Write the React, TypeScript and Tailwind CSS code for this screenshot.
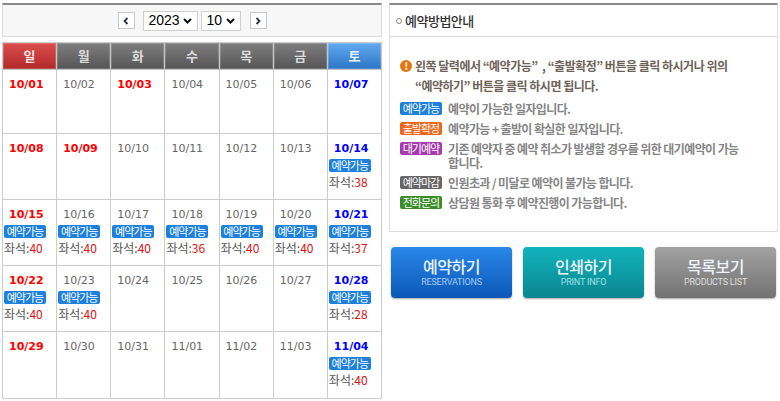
import React from 'react';

type Day = {
  date: string;
  tone: 'sun' | 'sat' | 'day';
  seats?: number;
};

const weeks: { h: string; days: Day[] }[] = [
  {
    h: 'h-[64px]',
    days: [
      { date: '10/01', tone: 'sun' },
      { date: '10/02', tone: 'day' },
      { date: '10/03', tone: 'sun' },
      { date: '10/04', tone: 'day' },
      { date: '10/05', tone: 'day' },
      { date: '10/06', tone: 'day' },
      { date: '10/07', tone: 'sat' },
    ],
  },
  {
    h: 'h-[66px]',
    days: [
      { date: '10/08', tone: 'sun' },
      { date: '10/09', tone: 'sun' },
      { date: '10/10', tone: 'day' },
      { date: '10/11', tone: 'day' },
      { date: '10/12', tone: 'day' },
      { date: '10/13', tone: 'day' },
      { date: '10/14', tone: 'sat', seats: 38 },
    ],
  },
  {
    h: 'h-[66px]',
    days: [
      { date: '10/15', tone: 'sun', seats: 40 },
      { date: '10/16', tone: 'day', seats: 40 },
      { date: '10/17', tone: 'day', seats: 40 },
      { date: '10/18', tone: 'day', seats: 36 },
      { date: '10/19', tone: 'day', seats: 40 },
      { date: '10/20', tone: 'day', seats: 40 },
      { date: '10/21', tone: 'sat', seats: 37 },
    ],
  },
  {
    h: 'h-[66px]',
    days: [
      { date: '10/22', tone: 'sun', seats: 40 },
      { date: '10/23', tone: 'day', seats: 40 },
      { date: '10/24', tone: 'day' },
      { date: '10/25', tone: 'day' },
      { date: '10/26', tone: 'day' },
      { date: '10/27', tone: 'day' },
      { date: '10/28', tone: 'sat', seats: 28 },
    ],
  },
  {
    h: 'h-[67px]',
    days: [
      { date: '10/29', tone: 'sun' },
      { date: '10/30', tone: 'day' },
      { date: '10/31', tone: 'day' },
      { date: '11/01', tone: 'day' },
      { date: '11/02', tone: 'day' },
      { date: '11/03', tone: 'day' },
      { date: '11/04', tone: 'sat', seats: 40 },
    ],
  },
];

const headers = [
  { label: '일', cls: 'bg-gradient-to-b from-[#dc4e4e] to-[#b12828] text-[#f4e4e4]' },
  { label: '월', cls: 'bg-gradient-to-b from-[#7e7e7e] to-[#565656] text-[#dcdcdc]' },
  { label: '화', cls: 'bg-gradient-to-b from-[#7e7e7e] to-[#565656] text-[#dcdcdc]' },
  { label: '수', cls: 'bg-gradient-to-b from-[#7e7e7e] to-[#565656] text-[#dcdcdc]' },
  { label: '목', cls: 'bg-gradient-to-b from-[#7e7e7e] to-[#565656] text-[#dcdcdc]' },
  { label: '금', cls: 'bg-gradient-to-b from-[#7e7e7e] to-[#565656] text-[#dcdcdc]' },
  { label: '토', cls: 'bg-gradient-to-b from-[#62aaf0] to-[#2a76c6] text-[#eaf3ff]' },
];

const legend = [
  { label: '예약가능', cls: 'bg-[#1c80dc]', text: '예약이 가능한 일자입니다.' },
  { label: '출발확정', cls: 'bg-[#f0661c]', text: '예약가능 + 출발이 확실한 일자입니다.' },
  { label: '대기예약', cls: 'bg-[#a43cae]', text: '기존 예약자 중 예약 취소가 발생할 경우를 위한 대기예약이 가능합니다.' },
  { label: '예약마감', cls: 'bg-[#666666]', text: '인원초과 / 미달로 예약이 불가능 합니다.' },
  { label: '전화문의', cls: 'bg-[#3c8c2a]', text: '상담원 통화 후 예약진행이 가능합니다.' },
];

const kr = "font-['Noto_Sans_CJK_KR',sans-serif]";

const Chevron = ({ dir }: { dir: 'left' | 'right' | 'down' }) => {
  if (dir === 'down') {
    return (
      <svg width="9" height="6" viewBox="0 0 9 6">
        <path d="M1 1l3.5 3.5L8 1" stroke="#111" strokeWidth="2" fill="none" />
      </svg>
    );
  }
  return (
    <svg width="6" height="8" viewBox="0 0 6 8">
      <path d={dir === 'left' ? 'M4.5 1L1.5 4l3 3' : 'M1.5 1l3 3-3 3'} stroke="#2a3446" strokeWidth="1.8" fill="none" />
    </svg>
  );
};

const Badge = ({ label, cls }: { label: string; cls: string }) => (
  <span className={`${cls} ${kr} inline-flex w-[42px] h-[13px] shrink-0 items-center justify-center rounded-[2px] text-[11px] leading-none tracking-[-1px] text-white`}>
    {label}
  </span>
);

const DayCell = ({ d }: { d: Day }) => {
  const dateCls =
    d.tone === 'sun'
      ? 'font-bold text-[#ff0000]'
      : d.tone === 'sat'
      ? 'font-bold text-[#0000ff]'
      : 'text-[#666666]';
  return (
    <div className="border-r border-b border-[#cccccc] pt-[7px] pl-[1px]">
      <div className={`pl-[5px] h-[16px] leading-[16px] text-[11px] font-['DejaVu_Sans',sans-serif] ${dateCls}`}>{d.date}</div>
      {d.seats !== undefined && (
        <>
          <div className="mt-[1px] h-[14px] flex items-center">
            <Badge label="예약가능" cls="bg-[#1c80dc]" />
          </div>
          <div className={`${kr} text-[12px] leading-[20px] text-[#555555]`}>
            좌석:<span className="text-[#e01010]">{d.seats}</span>
          </div>
        </>
      )}
    </div>
  );
};

const BigButton = ({ title, sub, cls, subCls }: { title: string; sub: string; cls: string; subCls: string }) => (
  <button
    type="button"
    className={`${cls} w-[121px] h-[51px] rounded-[4px] flex flex-col items-center justify-center shadow-[0_1px_2px_rgba(0,0,0,0.35)]`}
  >
    <span className={`${kr} text-[16px] leading-[18px] font-medium tracking-[-0.5px] text-[#eef4fb]`}>{title}</span>
    <span className={`font-['Roboto',sans-serif] text-[9px] leading-[11px] mt-[2px] tracking-[-0.2px] ${subCls}`}>{sub}</span>
  </button>
);

export default function App() {
  return (
    <div className="w-[780px] h-[401px] bg-white flex pt-[3px] pl-[2px]">
      {/* 달력 */}
      <div className="w-[380px] flex flex-col">
        <div className="h-[34px] border-t-2 border-t-[#888888] border-x border-b border-[#dddddd] bg-[#f7f7f7] flex items-center justify-center">
          <button type="button" className="w-[17px] h-[17px] bg-white border border-[#c8c8c8] flex items-center justify-center">
            <Chevron dir="left" />
          </button>
          <div className="ml-[8px] w-[55px] h-[20px] bg-white border border-[#d0d0d0] flex items-center justify-between pl-[5px] pr-[5px] text-[14px] font-['Liberation_Sans',sans-serif] text-black">
            2023
            <Chevron dir="down" />
          </div>
          <div className="ml-[3px] w-[40px] h-[20px] bg-white border border-[#d0d0d0] flex items-center justify-between pl-[5px] pr-[5px] text-[14px] font-['Liberation_Sans',sans-serif] text-black">
            10
            <Chevron dir="down" />
          </div>
          <button type="button" className="ml-[9px] w-[17px] h-[17px] bg-white border border-[#c8c8c8] flex items-center justify-center">
            <Chevron dir="right" />
          </button>
        </div>

        <div className="mt-[5px] border-l border-t border-[#cccccc] grid grid-cols-7">
          {headers.map((h) => (
            <div
              key={h.label}
              className={`${h.cls} ${kr} h-[27px] border-r border-b border-[#c4c4c4] shadow-[inset_0_0_0_1px_rgba(255,255,255,0.18)] flex items-center justify-center text-[13px] font-bold`}
            >
              {h.label}
            </div>
          ))}
        </div>
        {weeks.map((w, i) => (
          <div key={i} className={`${w.h} border-l border-[#cccccc] grid grid-cols-7`}>
            {w.days.map((d) => (
              <DayCell key={d.date} d={d} />
            ))}
          </div>
        ))}
      </div>

      {/* 예약방법안내 */}
      <div className="ml-[7px] w-[389px] flex flex-col">
        <div className="h-[229px] border-t-2 border-t-[#888888] border-x border-b border-[#dddddd] bg-white">
          <div className="h-[32px] border-b border-[#dddddd] flex items-center pl-[6px]">
            <span className="w-[6px] h-[6px] rounded-full border border-[#888888]" />
            <span className={`${kr} ml-[3px] text-[13px] font-medium tracking-[-0.5px] text-[#333333]`}>예약방법안내</span>
          </div>
          <div className="pt-[19px] pl-[10px] pr-[10px]">
            <div className={`${kr} flex text-[12px] leading-[20px] font-bold tracking-[-0.5px] text-[#6e6258]`}>
              <span className="mt-[4px] w-[12px] h-[12px] shrink-0 rounded-full bg-[#e3760e] text-white text-[10px] leading-[12px] text-center font-bold">!</span>
              <p className="ml-[3px]">
                왼쪽 달력에서 “예약가능” &nbsp;, “출발확정” 버튼을 클릭 하시거나 위의
                <br />
                “예약하기” 버튼을 클릭 하시면 됩니다.
              </p>
            </div>
            <div className="mt-[6px] flex flex-col gap-[6px]">
              {legend.map((l) => (
                <div key={l.label} className="flex items-start">
                  <Badge label={l.label} cls={l.cls} />
                  <p className={`${kr} ml-[6px] w-[300px] text-[12px] leading-[14px] font-bold tracking-[-0.6px] text-[#858585]`}>{l.text}</p>
                </div>
              ))}
            </div>
          </div>
        </div>

        <div className="mt-[15px] pl-[2px] flex gap-[11px]">
          <BigButton title="예약하기" sub="RESERVATIONS" cls="bg-gradient-to-b from-[#2a88ea] to-[#0a58b6]" subCls="text-[#a6caf4]" />
          <BigButton title="인쇄하기" sub="PRINT INFO" cls="bg-gradient-to-b from-[#12b4bc] to-[#0a8690]" subCls="text-[#9ee0e4]" />
          <BigButton title="목록보기" sub="PRODUCTS LIST" cls="bg-gradient-to-b from-[#a2a2a2] to-[#727272]" subCls="text-[#dddddd]" />
        </div>
      </div>
    </div>
  );
}
